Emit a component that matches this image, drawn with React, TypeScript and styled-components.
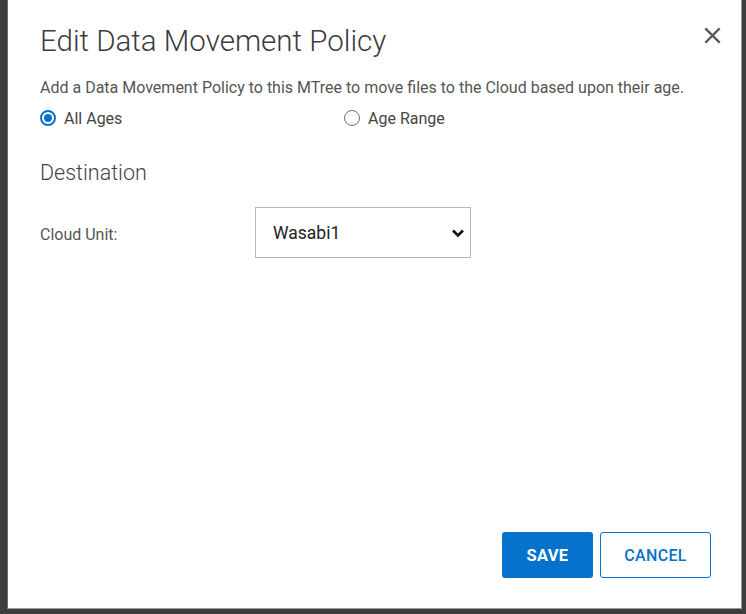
import * as React from "react";
import styled, { createGlobalStyle } from "styled-components";

const GlobalStyle = createGlobalStyle`
  html, body {
    margin: 0;
    padding: 0;
    background: #3d3d3d;
  }
  body {
    font-family: Roboto, "Liberation Sans", Arial, sans-serif;
  }
`;

const blue = "#0672cb";

function App() {
  const [ageMode, setAgeMode] = React.useState<"all" | "range">("all");

  return (
    <>
      <GlobalStyle />
      <Screen>
        <Dialog>
          <HeaderRow>
            <Title>Edit Data Movement Policy</Title>
            <CloseButton aria-label="Close">
              <svg width="17" height="17" viewBox="0 0 16 16">
                <path
                  d="M2 2 L14 14 M14 2 L2 14"
                  stroke="#5a5a5a"
                  strokeWidth="2.2"
                  strokeLinecap="square"
                />
              </svg>
            </CloseButton>
          </HeaderRow>
          <Description>
            Add a Data Movement Policy to this MTree to move files to the Cloud
            based upon their age.
          </Description>
          <RadioRow>
            <RadioOption $width={304} onClick={() => setAgeMode("all")}>
              <RadioDot $checked={ageMode === "all"} />
              <RadioLabel>All Ages</RadioLabel>
            </RadioOption>
            <RadioOption onClick={() => setAgeMode("range")}>
              <RadioDot $checked={ageMode === "range"} />
              <RadioLabel>Age Range</RadioLabel>
            </RadioOption>
          </RadioRow>
          <SectionTitle>Destination</SectionTitle>
          <FieldRow>
            <FieldLabel>Cloud Unit:</FieldLabel>
            <SelectBox>
              <SelectValue>Wasabi1</SelectValue>
              <svg width="14" height="10" viewBox="0 0 14 10">
                <path
                  d="M2 2.5 L7 7.5 L12 2.5"
                  fill="none"
                  stroke="#111"
                  strokeWidth="2.6"
                />
              </svg>
            </SelectBox>
          </FieldRow>
          <Spacer />
          <Footer>
            <PrimaryButton>SAVE</PrimaryButton>
            <SecondaryButton>CANCEL</SecondaryButton>
          </Footer>
        </Dialog>
      </Screen>
    </>
  );
}

const Screen = styled.div`
  width: 746px;
  height: 614px;
  display: flex;
  align-items: flex-start;
  padding-left: 7px;
  box-sizing: border-box;
`;

const Dialog = styled.div`
  width: 735px;
  height: 609px;
  background: #ffffff;
  border-left: 1px solid #6a6a6a;
  border-right: 1px solid #9a9a9a;
  border-bottom: 1px solid #9a9a9a;
  box-sizing: border-box;
  display: flex;
  flex-direction: column;
  padding: 24px 30px 30px 32px;
`;

const HeaderRow = styled.div`
  display: flex;
  justify-content: space-between;
  align-items: center;
  height: 34px;
`;

const Title = styled.h1`
  margin: 0;
  font-size: 29.5px;
  font-weight: 300;
  color: #3c3c3c;
  line-height: 34px;
`;

const CloseButton = styled.button`
  border: none;
  background: none;
  padding: 0;
  margin-right: -13px;
  margin-top: -12px;
  width: 24px;
  height: 24px;
  display: flex;
  align-items: center;
  justify-content: center;
  cursor: pointer;
`;

const Description = styled.p`
  margin: 20px 0 0;
  font-size: 16px;
  line-height: 20px;
  color: #555555;
`;

const RadioRow = styled.div`
  display: flex;
  align-items: center;
  margin-top: 10px;
  height: 20px;
`;

const RadioOption = styled.label<{ $width?: number }>`
  display: flex;
  align-items: center;
  gap: 8px;
  width: ${(p) => (p.$width ? `${p.$width}px` : "auto")};
  cursor: pointer;
`;

const RadioDot = styled.span<{ $checked: boolean }>`
  width: 16px;
  height: 16px;
  border-radius: 50%;
  box-sizing: border-box;
  border: ${(p) => (p.$checked ? `2px solid ${blue}` : "1.5px solid #6e6e6e")};
  position: relative;
  &::after {
    content: "";
    display: ${(p) => (p.$checked ? "block" : "none")};
    position: absolute;
    left: 2px;
    top: 2px;
    width: 8px;
    height: 8px;
    border-radius: 50%;
    background: ${blue};
  }
`;

const RadioLabel = styled.span`
  font-size: 16px;
  color: #444444;
`;

const SectionTitle = styled.h2`
  margin: 33px 0 0;
  font-size: 21.5px;
  font-weight: 300;
  line-height: 24px;
  color: #444444;
`;

const FieldRow = styled.div`
  display: flex;
  align-items: center;
  margin-top: 22px;
`;

const FieldLabel = styled.span`
  width: 215px;
  font-size: 16px;
  color: #555555;
  padding-top: 4px;
`;

const SelectBox = styled.div`
  width: 216px;
  height: 51px;
  box-sizing: border-box;
  border: 1px solid #b8b8b8;
  display: flex;
  align-items: center;
  justify-content: space-between;
  padding: 0 5px 0 17px;
`;

const SelectValue = styled.span`
  font-size: 17.5px;
  color: #222222;
`;

const Spacer = styled.div`
  flex: 1;
`;

const Footer = styled.div`
  display: flex;
  justify-content: flex-end;
  gap: 7px;
`;

const PrimaryButton = styled.button`
  width: 91px;
  height: 46px;
  border: none;
  border-radius: 3px;
  background: ${blue};
  color: #ffffff;
  font-family: Roboto, "Liberation Sans", Arial, sans-serif;
  font-size: 16.5px;
  font-weight: 700;
  letter-spacing: 0.3px;
  cursor: pointer;
`;

const SecondaryButton = styled.button`
  width: 111px;
  height: 46px;
  border: 1px solid ${blue};
  border-radius: 3px;
  background: #ffffff;
  color: ${blue};
  font-family: Roboto, "Liberation Sans", Arial, sans-serif;
  font-size: 16px;
  font-weight: 500;
  letter-spacing: 0.3px;
  cursor: pointer;
`;

export default App;
